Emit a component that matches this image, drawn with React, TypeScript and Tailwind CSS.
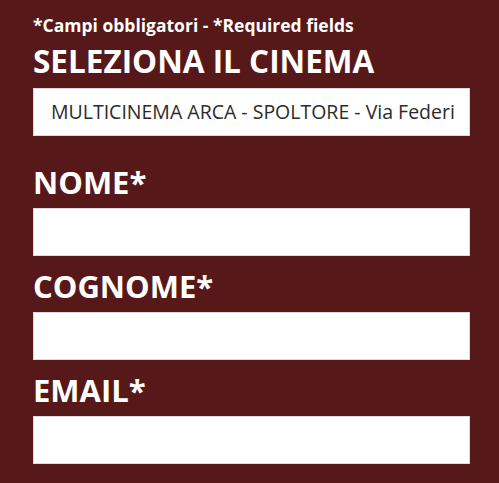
export default function App() {
  const fields = ["NOME*", "COGNOME*", "EMAIL*"];
  return (
    <div
      className="h-[483px] w-full bg-[#561818] pl-[33px] pr-[29px] pt-[13px]"
      style={{ fontFamily: '"Open Sans", "Noto Sans", sans-serif' }}
    >
      <p className="text-[17.5px] font-bold leading-[24px] text-white">
        *Campi obbligatori - *Required fields
      </p>
      <h2 className="mt-[2px] text-[31.5px] font-bold leading-[44px] text-white">
        SELEZIONA IL CINEMA
      </h2>
      <div className="mt-[5px] flex h-[48px] items-center border border-[#dcdcdc] bg-white pl-[17px] pr-[14px]">
        <span className="overflow-hidden whitespace-nowrap text-[19.5px] text-[#2b2b2b]">
          MULTICINEMA ARCA - SPOLTORE - Via Federico Fellini
        </span>
      </div>
      <div className="mt-[24px] flex flex-col">
        {fields.map((f) => (
          <div key={f} className="flex flex-col">
            <label className="text-[31px] font-bold leading-[44px] text-white">{f}</label>
            <input
              type="text"
              className="mb-[8px] mt-[4px] h-[48px] w-full border border-[#dcdcdc] bg-white outline-none"
            />
          </div>
        ))}
      </div>
    </div>
  );
}
